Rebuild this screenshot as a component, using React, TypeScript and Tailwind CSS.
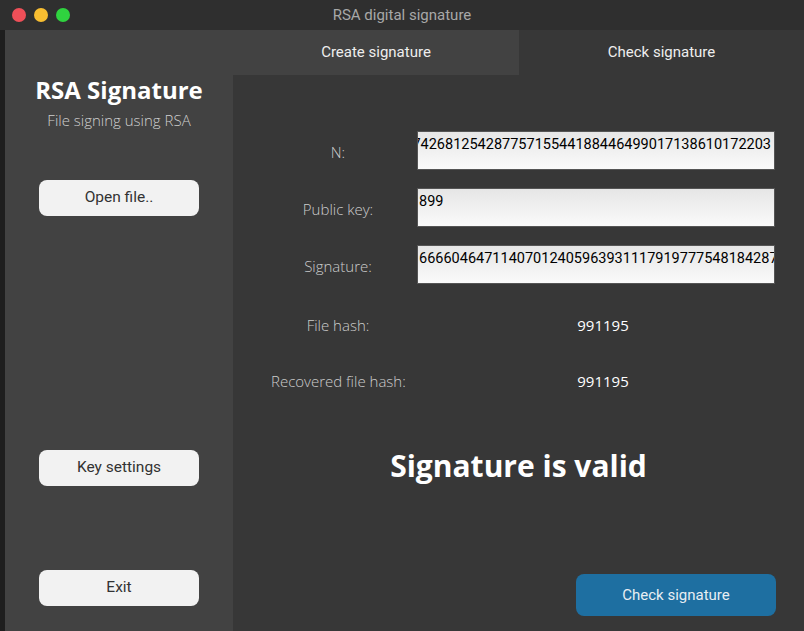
import React from 'react';

const rows = [
  { label: 'N:', value: '74268125428775715544188446499017138610172203', end: true },
  { label: 'Public key:', value: '899', end: false },
  { label: 'Signature:', value: '66660464711407012405963931117919777548184287', end: false },
];

const SideButton: React.FC<{ text: string }> = ({ text }) => (
  <button className="w-[160px] h-[36px] rounded-[8px] bg-[#f2f2f2] text-[#333] text-[15.5px] font-['Roboto',sans-serif]">
    {text}
  </button>
);

export default function App() {
  return (
    <div className="w-[804px] h-[631px] bg-[#1e1e1e] flex flex-col overflow-hidden font-['Roboto',sans-serif]">
      {/* Window title bar */}
      <div className="h-[30px] bg-[#2f2f2f] flex items-center relative shrink-0">
        <div className="flex gap-[8px] pl-[12px]">
          <span className="w-[14px] h-[14px] rounded-full bg-[#ef4f58]" />
          <span className="w-[14px] h-[14px] rounded-full bg-[#f8be31]" />
          <span className="w-[14px] h-[14px] rounded-full bg-[#2fd33f]" />
        </div>
        <div className="absolute inset-0 flex items-center justify-center text-[15px] text-[#a8a8a8] pointer-events-none">
          RSA digital signature
        </div>
      </div>

      <div className="flex flex-1 pl-[5px]">
        {/* Sidebar */}
        <div className="w-[228px] bg-[#424242] flex flex-col items-center">
          <h1 className="mt-[44px] text-[24px] font-bold text-white leading-[32px] font-['Open_Sans',sans-serif]">
            RSA Signature
          </h1>
          <p className="mt-[3px] text-[15px] text-[#cfcfcf] font-light font-['Open_Sans',sans-serif]">
            File signing using RSA
          </p>
          <div className="mt-[48px]">
            <SideButton text="Open file.." />
          </div>
          <div className="mt-[234px]">
            <SideButton text="Key settings" />
          </div>
          <div className="mt-[84px]">
            <SideButton text="Exit" />
          </div>
        </div>

        {/* Main area */}
        <div className="flex-1 flex flex-col bg-[#373737]">
          <div className="h-[45px] flex shrink-0 text-[15px] text-[#eeeeee]">
            <div className="w-[286px] bg-[#424242] flex items-center justify-center">Create signature</div>
            <div className="flex-1 flex items-center justify-center">Check signature</div>
          </div>

          <div className="flex flex-col pt-[56px]">
            {rows.map((r) => (
              <div key={r.label} className="flex items-center h-[39px] mb-[18px]">
                <div className="w-[172px] pl-[38px] pt-[3px] text-center text-[15px] text-[#cccccc] font-light font-['Open_Sans',sans-serif]">
                  {r.label}
                </div>
                <div
                  className={`ml-[12px] w-[358px] h-[39px] border border-[#555] bg-gradient-to-b from-[#e6e6e6] to-[#fafafa] overflow-hidden whitespace-nowrap text-[14.5px] text-black pl-[1px] pr-[3px] pt-[3px] leading-[20px] flex ${
                    r.end ? 'justify-end' : 'justify-start'
                  }`}
                >
                  <span className="shrink-0">{r.value}</span>
                </div>
              </div>
            ))}

            {[
              ['File hash:', '991195'],
              ['Recovered file hash:', '991195'],
            ].map(([l, v], i) => (
              <div key={l} className={`flex items-center h-[20px] ${i === 0 ? 'mt-[13px]' : 'mt-[36px]'}`}>
                <div className="w-[172px] pl-[38px] text-center text-[15px] text-[#cccccc] font-light font-['Open_Sans',sans-serif] whitespace-nowrap">
                  {l}
                </div>
                <div className="ml-[12px] w-[358px] pl-[14px] text-center text-[15px] text-white font-['Open_Sans',sans-serif]">
                  {v}
                </div>
              </div>
            ))}

            <div className="mt-[56px] text-center text-[30px] font-bold text-white font-['Open_Sans',sans-serif] leading-[38px]">
              Signature is valid
            </div>
          </div>

          <div className="mt-auto flex justify-end pr-[28px] pb-[15px]">
            <button className="w-[200px] h-[42px] rounded-[8px] bg-[#1e6fa1] text-[#e8eef3] text-[15px]">
              Check signature
            </button>
          </div>
        </div>
      </div>
    </div>
  );
}
